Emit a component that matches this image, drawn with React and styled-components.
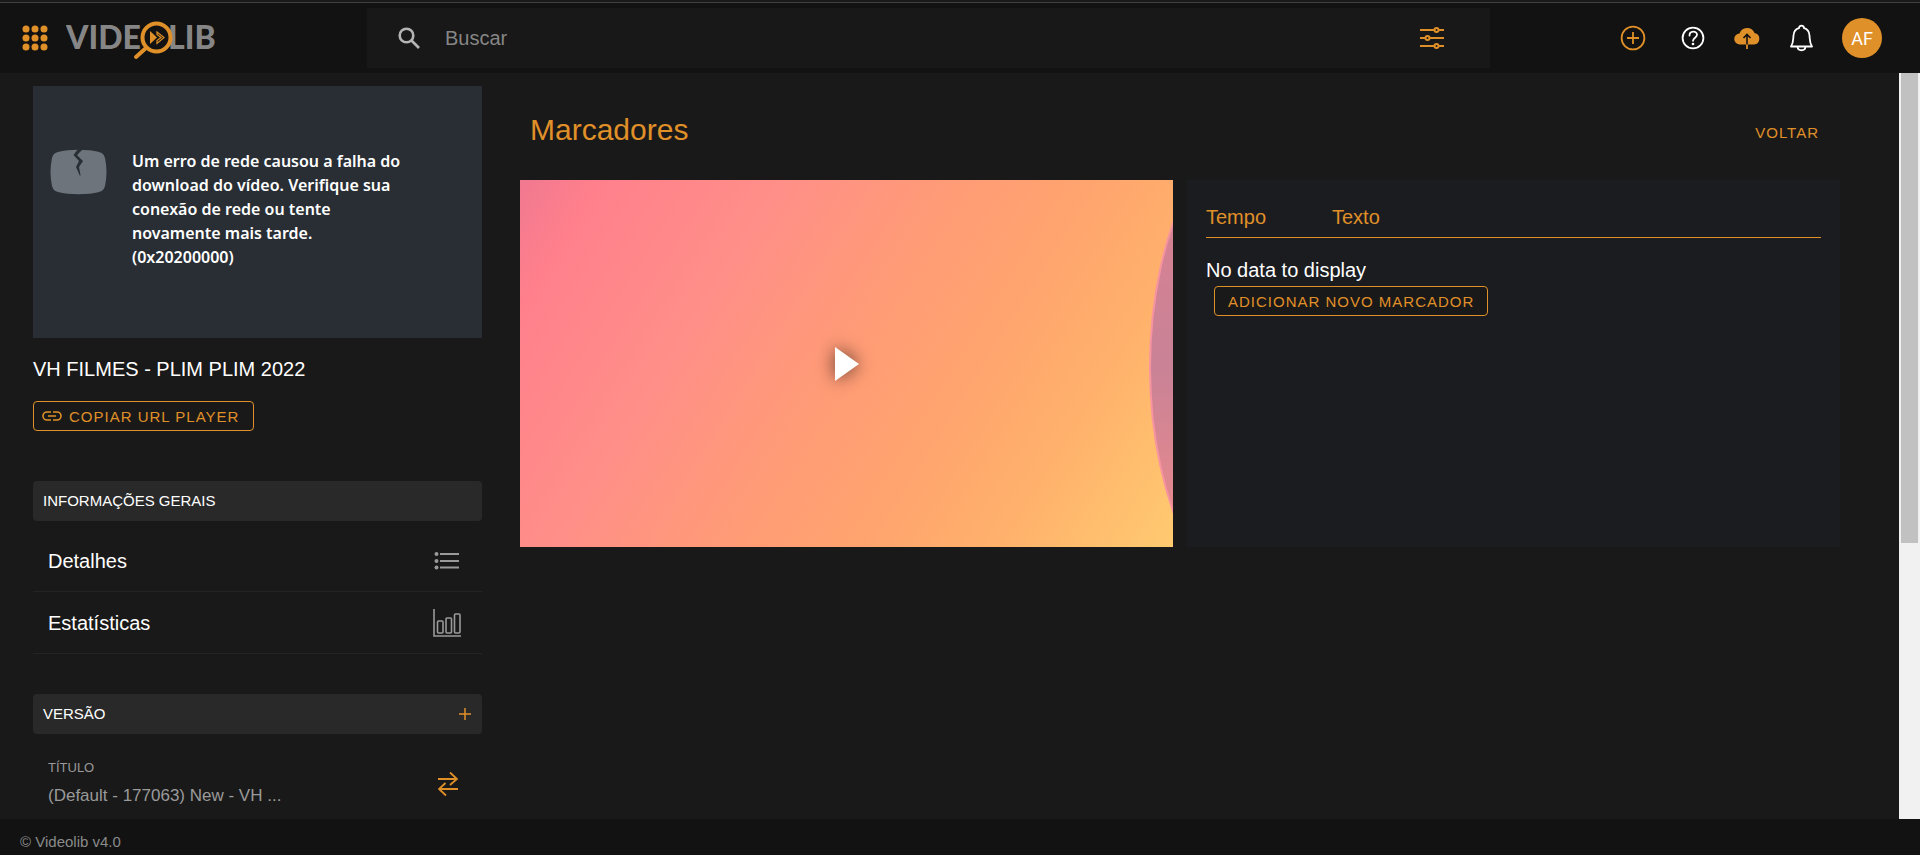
import React from 'react';
import styled, { createGlobalStyle } from 'styled-components';

const colors = {
  orange: '#e09028',
  bar: '#121212',
  page: '#191919',
  section: '#292929',
  panel: '#1b1c20',
  text: '#ffffff',
  muted: '#9a9a9a',
};

const GlobalStyle = createGlobalStyle`
  * {
    box-sizing: border-box;
  }

  body {
    margin: 0;
    background: ${colors.page};
    color: ${colors.text};
    font-family: 'Liberation Sans', Arial, sans-serif;
    font-size: 20px;
    line-height: 24px;
  }

  button, input {
    font-family: inherit;
  }
`;

const Page = styled.div`
  display: flex;
  flex-direction: column;
  height: 100vh;
`;

const Header = styled.header`
  display: flex;
  align-items: center;
  flex: none;
  margin-top: 2px;
  padding: 5px 38px 5px 22px;
  border-top: 1px solid #404040;
  background: ${colors.bar};
`;

const Brand = styled.div`
  display: flex;
  align-items: center;
  gap: 18px;
  width: 345px;
`;

const IconButton = styled.button`
  display: flex;
  align-items: center;
  justify-content: center;
  padding: 0;
  border: 0;
  background: none;
  color: ${props => props.$color || colors.orange};
  cursor: pointer;
`;

const LogoLink = styled.a`
  display: flex;
`;

const SearchForm = styled.form`
  display: flex;
  align-items: center;
  flex: 1;
  height: 60px;
  margin-right: 130px;
  padding: 0 46px 0 30px;
  background: #181818;
`;

const SearchInput = styled.input`
  flex: 1;
  min-width: 0;
  height: 40px;
  padding: 0 24px;
  border: 0;
  outline: 0;
  background: transparent;
  color: ${colors.text};
  font-size: 20px;

  &::placeholder {
    color: #868686;
    opacity: 1;
  }
`;

const Actions = styled.div`
  display: grid;
  grid-template-columns: 32px 26px 26px 26px 40px;
  align-items: center;
  justify-items: start;
  gap: 28px;
`;

const Avatar = styled.button`
  width: 40px;
  height: 40px;
  padding: 0;
  border: 0;
  border-radius: 50%;
  background: ${colors.orange};
  color: ${colors.text};
  font-family: Roboto, sans-serif;
  font-size: 18px;
  cursor: pointer;
`;

const Body = styled.div`
  display: flex;
  flex: 1;
  min-height: 0;
`;

const Content = styled.div`
  display: flex;
  flex: 1;
  gap: 38px;
  min-width: 0;
  padding: 13px 59px 0 33px;
  overflow: hidden;
`;

const ScrollTrack = styled.div`
  width: 21px;
  padding: 0 2px;
  background: #f1f1f1;
`;

const ScrollThumb = styled.div`
  height: 63%;
  background: #c1c1c1;
`;

const Sidebar = styled.aside`
  flex: none;
  width: 449px;
`;

const PlayerError = styled.div`
  display: flex;
  gap: 25px;
  height: 252px;
  padding: 63px 64px 0 17px;
  background: #292e35;

  svg {
    flex: none;
  }
`;

const ErrorText = styled.p`
  margin: 0;
  font-family: 'Noto Sans', 'Open Sans', sans-serif;
  font-size: 16px;
  font-weight: 600;
  line-height: 24px;
`;

const VideoTitle = styled.h2`
  margin: 19px 0 20px;
  font-size: 20px;
  font-weight: 400;
`;

const OutlineButton = styled.button`
  display: inline-flex;
  align-items: center;
  gap: 7px;
  height: 30px;
  margin: 0;
  margin-left: ${props => (props.$indent ? '8px' : '0')};
  padding: ${props => (props.$indent ? '0 13px' : '0 14px 0 8px')};
  border: 1px solid ${colors.orange};
  border-radius: 4px;
  background: ${colors.page};
  color: ${colors.orange};
  font-size: 15px;
  letter-spacing: 1px;
  text-transform: uppercase;
  cursor: pointer;
`;

const SectionBar = styled.div`
  display: flex;
  align-items: center;
  justify-content: space-between;
  height: 40px;
  margin-top: ${props => (props.$first ? '50px' : '40px')};
  padding: 0 10px;
  border-radius: 4px;
  background: ${colors.section};
`;

const SectionTitle = styled.h3`
  margin: 0;
  font-size: 15px;
  font-weight: 400;
  text-transform: uppercase;
`;

const MenuList = styled.nav`
  padding-top: 9px;
`;

const MenuItem = styled.a`
  display: flex;
  align-items: center;
  justify-content: space-between;
  height: 62px;
  padding: 0 20px 0 15px;
  border-bottom: 1px solid #242424;
  color: ${colors.text};
  text-decoration: none;
`;

const Version = styled.div`
  display: flex;
  align-items: center;
  justify-content: space-between;
  padding: 20px 24px 0 15px;
`;

const VersionLabel = styled.div`
  color: ${colors.muted};
  font-size: 13px;
  line-height: 28px;
`;

const VersionName = styled.div`
  color: ${colors.muted};
  font-size: 17px;
  line-height: 28px;
`;

const Main = styled.main`
  flex: 1;
  min-width: 0;
`;

const MainHeader = styled.div`
  display: flex;
  align-items: center;
  justify-content: space-between;
  height: 94px;
  padding: 0 21px 6px 10px;
`;

const PageTitle = styled.h1`
  margin: 0;
  color: ${colors.orange};
  font-size: 30px;
  font-weight: 400;
  line-height: 36px;
`;

const BackLink = styled.a`
  padding-top: 6px;
  color: ${colors.orange};
  font-size: 15px;
  letter-spacing: 1px;
  text-decoration: none;
  text-transform: uppercase;
`;

const Columns = styled.div`
  display: grid;
  grid-template-columns: 1fr 1fr;
  gap: 14px;
`;

const VideoFrame = styled.div`
  position: relative;
  aspect-ratio: 16 / 9;
  overflow: hidden;
  background: linear-gradient(122deg, #f07890 0%, #ff808c 9%, #ff8f88 30%, #ff9a78 47%, #ffa46e 65%, #ffb26c 81%, #ffca70 100%);
`;

const VideoArt = styled.svg`
  display: block;
  width: 100%;
  height: 100%;
`;

const PlayButton = styled.button`
  position: absolute;
  inset: 0;
  display: flex;
  align-items: center;
  justify-content: center;
  padding: 0;
  border: 0;
  background: none;
  cursor: pointer;

  svg {
    overflow: visible;
    filter: drop-shadow(0 0 9px rgba(0, 0, 0, 0.65));
  }
`;

const MarkersPanel = styled.section`
  padding: 19px;
  background: ${colors.panel};
`;

const MarkersTable = styled.table`
  width: 100%;
  margin-bottom: 4px;
  border-collapse: collapse;
  table-layout: fixed;
`;

const HeadCell = styled.th`
  width: ${props => props.$width || 'auto'};
  padding: 6px 0 8px;
  border-bottom: 1px solid ${colors.orange};
  color: ${colors.orange};
  font-weight: 400;
  text-align: left;
`;

const EmptyCell = styled.td`
  padding: 20px 0 0;
`;

const Footer = styled.footer`
  flex: none;
  height: 36px;
  padding: 11px 20px 0;
  background: ${colors.bar};
  color: #8a8a8a;
  font-size: 15px;
`;

const GridIcon = () => (
  <svg width="26" height="26" viewBox="0 0 26 26" fill="currentColor">
    {[4, 13, 22].map(y => [4, 13, 22].map(x => <circle key={`${x}-${y}`} cx={x} cy={y} r="3.5" />))}
  </svg>
);

const Logo = () => (
  <svg width="156" height="48" viewBox="0 0 156 48">
    <g fill="#868686" fontFamily="Lato, sans-serif" fontWeight="900" fontSize="32">
      <text x="0" y="35">VIDE</text>
      <text x="102" y="35">LIB</text>
    </g>
    <path d="M80 34 70 43" stroke={colors.orange} strokeWidth="4" strokeLinecap="round" />
    <circle cx="90.5" cy="23.5" r="14" fill={colors.bar} stroke={colors.orange} strokeWidth="4" />
    <path d="M84 17v13l7-6.5z" fill={colors.orange} />
    <path d="m91 18 7 5.500-7 6v-3l4-3-4-3z" fill="none" stroke={colors.orange} strokeWidth="1.2" />
  </svg>
);

const SearchIcon = () => (
  <svg width="24" height="24" viewBox="0 0 24 24" fill="none" stroke="#b4b4b4" strokeWidth="2.6">
    <circle cx="9.500" cy="9.500" r="6.800" />
    <path d="m14 14 8 8" />
  </svg>
);

const FilterIcon = () => (
  <svg width="24" height="22" viewBox="0 0 24 22" fill="none" stroke="currentColor" strokeWidth="2">
    <path d="M0 3h14M19 3h5M0 11h5M10 11h14M0 19h14M19 19h5" />
    <circle cx="16.5" cy="3" r="2" />
    <circle cx="7.5" cy="11" r="2" />
    <circle cx="16.5" cy="19" r="2" />
  </svg>
);

const AddCircleIcon = () => (
  <svg width="26" height="26" viewBox="0 0 26 26" fill="none" stroke="currentColor" strokeWidth="1.8">
    <circle cx="13" cy="13" r="11.4" />
    <path d="M13 7v12M7 13h12" />
  </svg>
);

const HelpIcon = () => (
  <svg width="26" height="26" viewBox="0 0 26 26" fill="none" stroke="currentColor" strokeWidth="1.8">
    <circle cx="13" cy="13" r="10.4" />
    <path d="M9.500 10.500c0-5 7.500-5 7.500-.7 0 2.800-4 3-4 6" strokeLinecap="round" />
    <circle cx="13" cy="19" r="1.3" fill="currentColor" stroke="none" />
  </svg>
);

const CloudIcon = () => (
  <svg width="26" height="24" viewBox="0 0 26 24">
    <path d="M6 18.5a5.500 5.500 0 0 1-.5-11A8 8 0 0 1 20.500 7a5.800 5.800 0 0 1-.5 11.500z" fill="currentColor" />
    <path d="M13 18.500V9M9.500 12 13 8.500l3.500 3.500" fill="none" stroke={colors.bar} strokeWidth="1.6" />
    <path d="M13 18.500v4.500" stroke="currentColor" strokeWidth="1.8" />
  </svg>
);

const BellIcon = () => (
  <svg width="26" height="28" viewBox="0 0 26 28" fill="none" stroke="currentColor" strokeWidth="1.8" strokeLinejoin="round">
    <path d="M3 22.500C5.500 19 5 16.500 5.500 11.500 5.800 7.500 8 5 11 4.200c0-3.500 5-3.500 5 0 3 .8 5.200 3.300 5.500 7.300.5 5 0 7.500 2.500 11z" />
    <path d="M9.500 22.500c.3 5 7.700 5 8 0" />
  </svg>
);

const BrokenIcon = () => (
  <svg width="57" height="46" viewBox="0 0 57 46">
    <path d="M8 3C19 0 38 0 49 3c4 1 5 3 6 6 2 9 2 19 0 28-1 3-2 5-6 6-11 3-30 3-41 0-4-1-5-3-6-6C0 28 0 18 2 9c1-3 2-5 6-6z" fill="#6d747c" />
    <path d="M28 0 23.500 6l5.500 6-3 6 4 9 .500-1-1.500-8 4-6-6-6 6-6z" fill="#292e35" />
  </svg>
);

const LinkIcon = () => (
  <svg width="20" height="10" viewBox="0 0 20 10" fill="none" stroke="currentColor" strokeWidth="1.6">
    <path d="M9 1H5a4 4 0 0 0 0 8h4M11 1h4a4 4 0 0 1 0 8h-4M6 5h8" />
  </svg>
);

const ListIcon = () => (
  <svg width="29" height="20" viewBox="0 0 29 20" stroke={colors.muted} strokeWidth="1.8">
    <path d="M7 3h19M7 10h19M7 16.500h19" />
    <g fill={colors.muted} stroke="none">
      <circle cx="3.5" cy="3" r="2" />
      <circle cx="3.5" cy="10" r="2" />
      <circle cx="3.5" cy="16.5" r="2" />
    </g>
  </svg>
);

const ChartIcon = () => (
  <svg width="29" height="30" viewBox="0 0 29 30" fill="none" stroke={colors.muted} strokeWidth="1.6">
    <path d="M1 1v27h27" />
    <rect x="4.5" y="13" width="5.5" height="12" rx="1" />
    <rect x="13" y="10" width="5.5" height="15" rx="1" />
    <rect x="21.500" y="6" width="5.5" height="19" rx="1" />
  </svg>
);

const PlusIcon = () => (
  <svg width="14" height="14" viewBox="0 0 14 14" stroke="currentColor" strokeWidth="1.5">
    <path d="M7 1v12M1 7h12" />
  </svg>
);

const SwapIcon = () => (
  <svg width="20" height="30" viewBox="0 0 20 30" fill="none" stroke="currentColor" strokeWidth="1.8">
    <path d="M0 12h19M12 5.500l7 6.500-7 6M20 22H1M7.500 16 1 22l7 6.500" />
  </svg>
);

const App = () => {
  return (
    <Page>
      <GlobalStyle />
      <Header>
        <Brand>
          <IconButton aria-label="Menu"><GridIcon /></IconButton>
          <LogoLink href="#" aria-label="Videolib"><Logo /></LogoLink>
        </Brand>
        <SearchForm role="search">
          <SearchIcon />
          <SearchInput type="text" placeholder="Buscar" aria-label="Buscar" />
          <IconButton type="button" aria-label="Filtros"><FilterIcon /></IconButton>
        </SearchForm>
        <Actions>
          <IconButton aria-label="Adicionar"><AddCircleIcon /></IconButton>
          <IconButton aria-label="Ajuda" $color="#ffffff"><HelpIcon /></IconButton>
          <IconButton aria-label="Enviar"><CloudIcon /></IconButton>
          <IconButton aria-label="Notificações" $color="#ffffff"><BellIcon /></IconButton>
          <Avatar>AF</Avatar>
        </Actions>
      </Header>

      <Body>
        <Content>
          <Sidebar>
            <PlayerError>
              <BrokenIcon />
              <ErrorText>
                Um erro de rede causou a falha do download do vídeo. Verifique sua
                conexão de rede ou tente novamente mais tarde. (0x20200000)
              </ErrorText>
            </PlayerError>
            <VideoTitle>VH FILMES - PLIM PLIM 2022</VideoTitle>
            <OutlineButton><LinkIcon />Copiar URL Player</OutlineButton>

            <SectionBar $first>
              <SectionTitle>Informações gerais</SectionTitle>
            </SectionBar>
            <MenuList>
              <MenuItem href="#detalhes">Detalhes<ListIcon /></MenuItem>
              <MenuItem href="#estatisticas">Estatísticas<ChartIcon /></MenuItem>
            </MenuList>

            <SectionBar>
              <SectionTitle>Versão</SectionTitle>
              <IconButton aria-label="Nova versão"><PlusIcon /></IconButton>
            </SectionBar>
            <Version>
              <div>
                <VersionLabel>TÍTULO</VersionLabel>
                <VersionName>(Default - 177063) New - VH ...</VersionName>
              </div>
              <IconButton aria-label="Trocar versão"><SwapIcon /></IconButton>
            </Version>
          </Sidebar>

          <Main>
            <MainHeader>
              <PageTitle>Marcadores</PageTitle>
              <BackLink href="#voltar">Voltar</BackLink>
            </MainHeader>
            <Columns>
              <VideoFrame>
                <VideoArt viewBox="0 0 653 367" preserveAspectRatio="none">
                  <defs>
                    <linearGradient id="disc" x1="0" y1="0" x2="0" y2="1">
                      <stop offset="0.2" stopColor="#d88292" />
                      <stop offset="0.5" stopColor="#c98296" />
                      <stop offset="0.8" stopColor="#ea8a8c" />
                    </linearGradient>
                  </defs>
                  <ellipse cx="780" cy="187" rx="150" ry="270" fill="url(#disc)" stroke="#f894a0" strokeWidth="2" />
                </VideoArt>
                <PlayButton aria-label="Reproduzir">
                  <svg width="24" height="34" viewBox="0 0 24 34">
                    <path d="M0 0 24 17 0 34z" fill="#ffffff" />
                  </svg>
                </PlayButton>
              </VideoFrame>
              <MarkersPanel>
                <MarkersTable>
                  <thead>
                    <tr>
                      <HeadCell $width="126px">Tempo</HeadCell>
                      <HeadCell>Texto</HeadCell>
                    </tr>
                  </thead>
                  <tbody>
                    <tr>
                      <EmptyCell colSpan={2}>No data to display</EmptyCell>
                    </tr>
                  </tbody>
                </MarkersTable>
                <OutlineButton $indent>Adicionar novo marcador</OutlineButton>
              </MarkersPanel>
            </Columns>
          </Main>
        </Content>
        <ScrollTrack>
          <ScrollThumb />
        </ScrollTrack>
      </Body>
      <Footer>© Videolib v4.0</Footer>
    </Page>
  );
};

export default App;
